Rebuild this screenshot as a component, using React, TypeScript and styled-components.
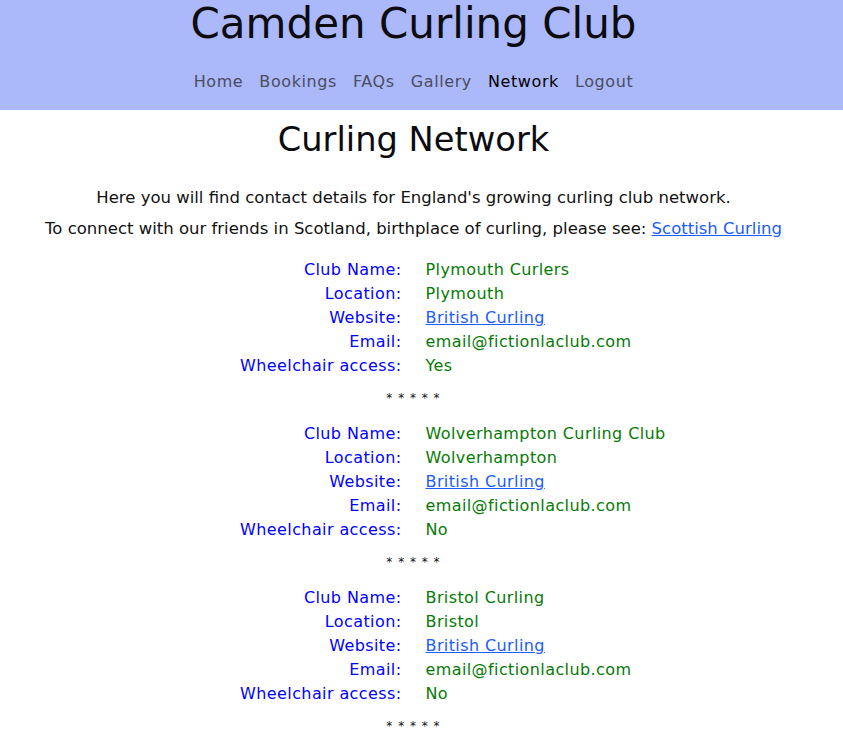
import React from "react";
import styled, { createGlobalStyle } from "styled-components";

const Global = createGlobalStyle`
  html, body { margin: 0; padding: 0; background: #ffffff; }
  body { font-family: "DejaVu Sans", sans-serif; }
`;

const Page = styled.div`
  width: 843px;
`;

const Header = styled.header`
  background: #abb8f9;
  height: 110px;
  padding-right: 16px;
  display: flex;
  flex-direction: column;
  align-items: center;
`;

const Title = styled.h1`
  margin: 0;
  font-family: "DejaVu Sans", sans-serif;
  font-weight: 400;
  font-size: 42px;
  line-height: 46px;
  padding-top: 1px;
  color: #0b0b10;
`;

const Nav = styled.nav`
  display: flex;
  gap: 16px;
  margin-top: 19px;
`;

const NavLink = styled.a<{ $active?: boolean }>`
  font-family: "DejaVu Sans", sans-serif;
  font-size: 16px;
  letter-spacing: 0.6px;
  line-height: 32px;
  color: ${(p) => (p.$active ? "#000000" : "#4a4d60")};
  text-decoration: none;
`;

const Main = styled.main`
  padding-right: 16px;
  display: flex;
  flex-direction: column;
  align-items: center;
`;

const Heading = styled.h2`
  margin: 10px 0 0;
  font-family: "DejaVu Sans", sans-serif;
  font-weight: 400;
  font-size: 33.7px;
  line-height: 40px;
  color: #0b0b10;
`;

const Para = styled.p<{ $top: number }>`
  margin: ${(p) => p.$top}px 0 0;
  font-family: "DejaVu Sans", sans-serif;
  font-size: 16.5px;
  line-height: 24px;
  color: #111;
`;

const Link = styled.a`
  color: #1a5cff;
  text-decoration: underline;
`;

const ClubTable = styled.div<{ $top: number }>`
  width: 100%;
  display: grid;
  grid-template-columns: 1fr 1fr;
  column-gap: 24px;
  margin-top: ${(p) => p.$top}px;
`;

const Label = styled.div`
  text-align: right;
  font-family: "DejaVu Sans", sans-serif;
  font-size: 16px;
  letter-spacing: 0.4px;
  line-height: 24px;
  color: #0000ff;
`;

const Value = styled.div`
  text-align: left;
  font-family: "DejaVu Sans", sans-serif;
  font-size: 16px;
  letter-spacing: 0.4px;
  line-height: 24px;
  color: #067a06;
`;

const ValueLink = styled.a`
  color: #1a5cff;
  text-decoration: underline;
`;

const Stars = styled.div`
  margin-top: 12px;
  font-family: "DejaVu Sans", sans-serif;
  font-size: 12px;
  line-height: 16px;
  color: #111;
  letter-spacing: 1px;
`;

const clubs = [
  { name: "Plymouth Curlers", location: "Plymouth", access: "Yes" },
  { name: "Wolverhampton Curling Club", location: "Wolverhampton", access: "No" },
  { name: "Bristol Curling", location: "Bristol", access: "No" },
];

export default function App() {
  return (
    <Page>
      <Global />
      <Header>
        <Title>Camden Curling Club</Title>
        <Nav>
          <NavLink href="#">Home</NavLink>
          <NavLink href="#">Bookings</NavLink>
          <NavLink href="#">FAQs</NavLink>
          <NavLink href="#">Gallery</NavLink>
          <NavLink href="#" $active>Network</NavLink>
          <NavLink href="#">Logout</NavLink>
        </Nav>
      </Header>
      <Main>
        <Heading>Curling Network</Heading>
        <Para $top={26}>
          Here you will find contact details for England's growing curling club network.
        </Para>
        <Para $top={7}>
          To connect with our friends in Scotland, birthplace of curling, please see:{" "}
          <Link href="#">Scottish Curling</Link>
        </Para>
        {clubs.map((c, i) => (
          <React.Fragment key={c.name}>
            <ClubTable $top={i === 0 ? 17 : 16}>
              <Label>Club Name:</Label>
              <Value>{c.name}</Value>
              <Label>Location:</Label>
              <Value>{c.location}</Value>
              <Label>Website:</Label>
              <Value>
                <ValueLink href="#">British Curling</ValueLink>
              </Value>
              <Label>Email:</Label>
              <Value>email@fictionlaclub.com</Value>
              <Label>Wheelchair access:</Label>
              <Value>{c.access}</Value>
            </ClubTable>
            <Stars>* * * * *</Stars>
          </React.Fragment>
        ))}
      </Main>
    </Page>
  );
}
